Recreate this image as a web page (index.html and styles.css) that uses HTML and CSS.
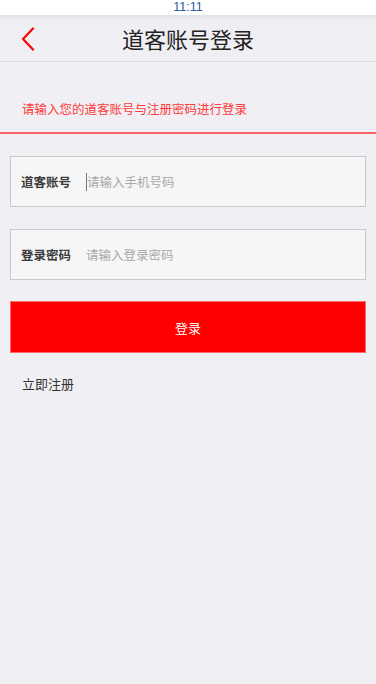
FILE: index.html
```html
<!DOCTYPE html>
<html lang="zh">
<head>
<meta charset="utf-8">
<title>道客账号登录</title>
<link rel="stylesheet" href="styles.css">
</head>
<body>
<div class="status">11:11</div>
<header class="nav">
  <span class="back">
    <svg width="14" height="24" viewBox="0 0 14 24"><path d="M12 1.5 L2 12 L12 22.5" fill="none" stroke="#ff0000" stroke-width="2.2" stroke-linecap="round" stroke-linejoin="round"/></svg>
  </span>
  <h1 class="title">道客账号登录</h1>
</header>
<main class="content">
  <p class="hint">请输入您的道客账号与注册密码进行登录</p>
  <div class="rule"></div>
  <div class="form">
    <div class="field">
      <span class="label">道客账号</span>
      <span class="input"><span class="caret"></span>请输入手机号码</span>
    </div>
    <div class="field">
      <span class="label">登录密码</span>
      <span class="input">请输入登录密码</span>
    </div>
    <div class="btn">登录</div>
    <div class="register">立即注册</div>
  </div>
</main>
</body>
</html>
```
FILE: styles.css
```css
* { box-sizing: border-box; }
html, body { margin: 0; padding: 0; }
body {
  width: 376px;
  height: 684px;
  background: #f0eff4;
  font-family: "Noto Sans CJK SC", "Noto Sans", sans-serif;
  color: #222;
  overflow: hidden;
}
.status {
  height: 15px;
  background: #ffffff;
  text-align: center;
  font-family: "Liberation Sans", Arial, sans-serif;
  font-size: 12.5px;
  line-height: 15px;
  color: #2c5d9a;
}
.nav {
  height: 47px;
  background: linear-gradient(#e2e1e6 0px, #efeef3 6px, #f0eff4 100%);
  border-bottom: 1px solid #dcdbe0;
  display: flex;
  align-items: center;
  justify-content: center;
  position: relative;
}
.back {
  position: absolute;
  left: 21px;
  top: 12px;
  display: block;
  width: 14px;
  height: 24px;
}
.back svg { display: block; }
.title {
  margin: 0;
  font-size: 22px;
  font-weight: 400;
  color: #222;
  line-height: 30px;
}
.hint {
  margin: 0;
  height: 70px;
  padding: 37px 0 0 22px;
  font-size: 12.5px;
  line-height: 20px;
  color: #ff3a3a;
}
.rule {
  height: 2px;
  background: #ff6464;
}
.form {
  padding: 22px 10px 0 10px;
  display: flex;
  flex-direction: column;
}
.field {
  height: 51px;
  background: #f6f6f6;
  border: 1.5px solid #c9c9c9;
  display: flex;
  align-items: center;
  padding-left: 10px;
  margin-bottom: 22px;
}
.label {
  width: 65px;
  font-size: 12.5px;
  font-weight: 600;
  color: #3a3a3a;
}
.input {
  display: flex;
  align-items: center;
  font-size: 12.5px;
  color: #a9a9a9;
}
.caret {
  display: inline-block;
  width: 1px;
  height: 18px;
  background: #777;
}
.btn {
  margin-top: -1px;
  height: 52px;
  background: #ff0000;
  border: 1px solid #ff6a6a;
  color: #ffffff;
  font-size: 13px;
  display: flex;
  align-items: center;
  justify-content: center;
}
.register {
  margin-top: 22px;
  padding-left: 12px;
  font-size: 13px;
  color: #333;
  line-height: 18px;
}
```
